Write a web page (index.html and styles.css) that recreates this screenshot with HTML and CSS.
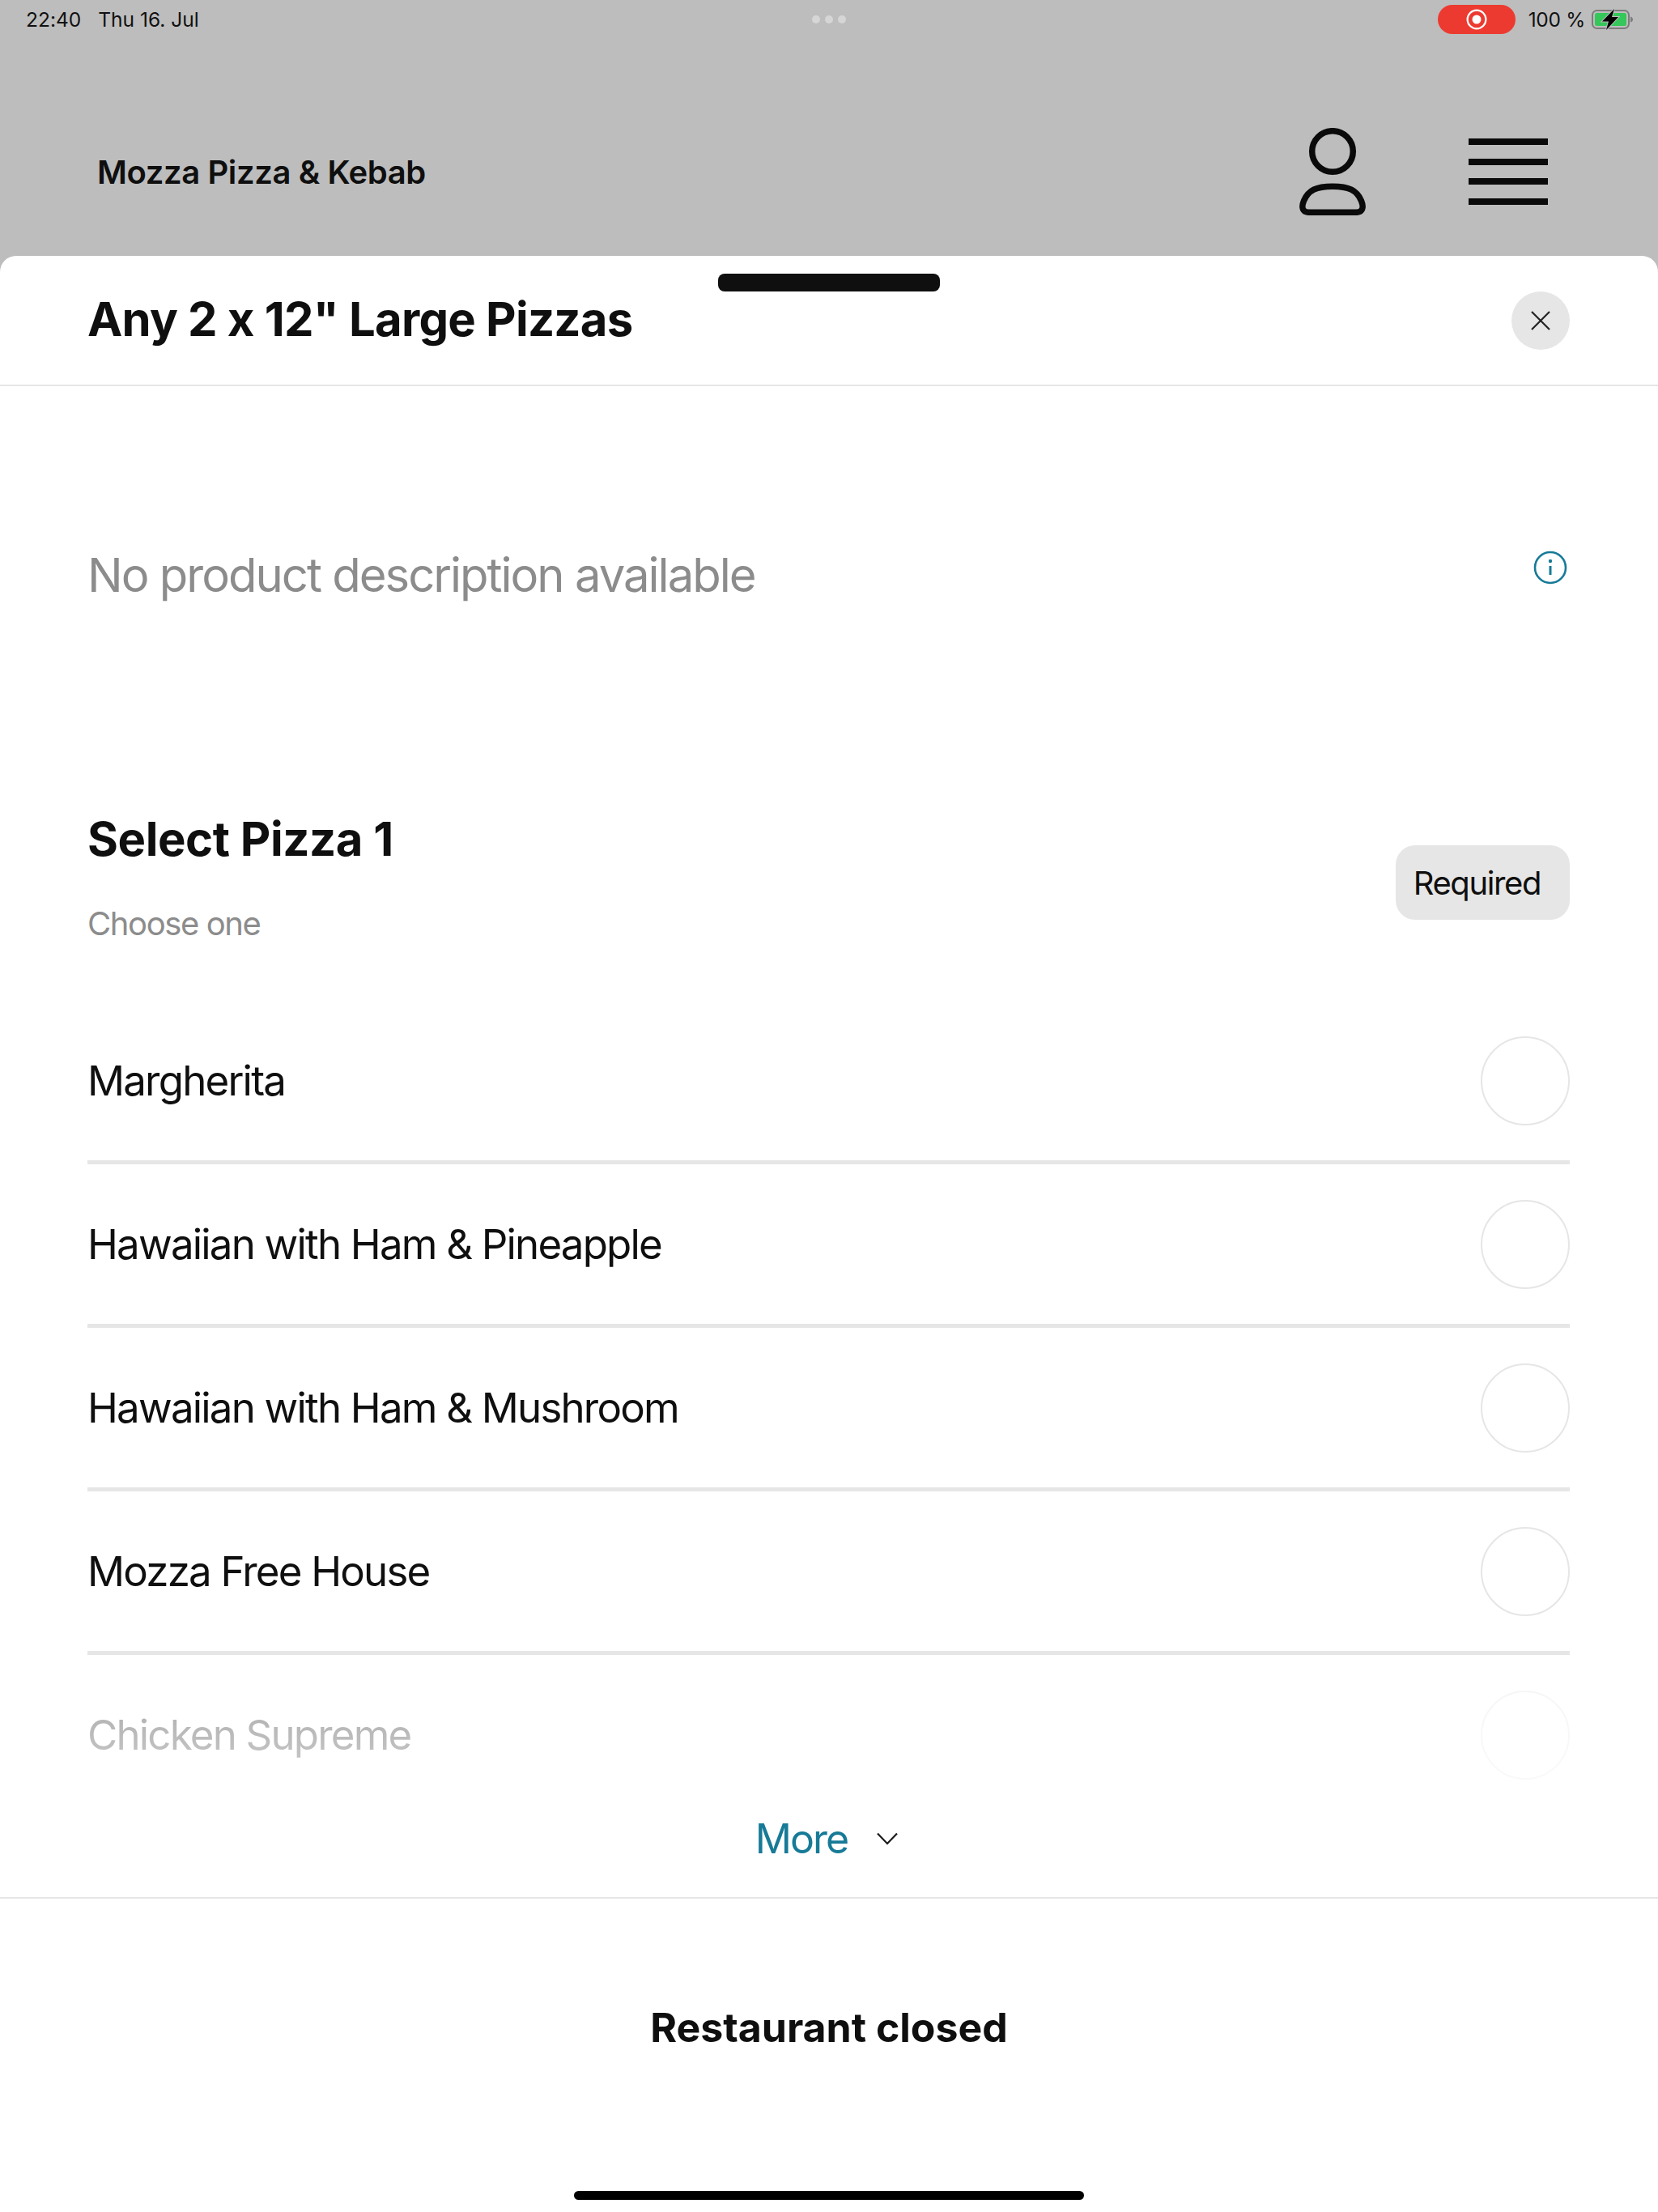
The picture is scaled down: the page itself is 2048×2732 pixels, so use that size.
FILE: index.html
```html
<!DOCTYPE html>
<html lang="en">
<head>
    <meta charset="UTF-8" />
    <title>Mozza Pizza &amp; Kebab</title>
    <link rel="stylesheet" href="styles.css">
</head>
<body>
<div class="statusbar">
  <div class="status-left"><span>22:40</span><span>Thu 16. Jul</span></div>
  <div class="status-dots"><i></i><i></i><i></i></div>
  <div class="status-right">
    <div class="rec-pill">
      <svg width="26" height="26" viewBox="0 0 26 26"><circle cx="13" cy="13" r="11.400" fill="none" stroke="#fff" stroke-width="2.200"/><circle cx="13" cy="13" r="5.500" fill="#fff"/></svg>
    </div>
    <span class="battery-text">100 %</span>
    <svg class="battery" width="52" height="26" viewBox="0 0 52 26">
      <rect x="1" y="2" width="45" height="22" rx="5.500" fill="none" stroke="#7c7c7c" stroke-width="2"/>
      <rect x="4" y="5" width="39" height="16" rx="2.500" fill="#34c759"/>
      <path d="M48 9.500c2 .5 3 2 3 3.500s-1 3-3 3.500z" fill="#7c7c7c"/>
      <path d="M28 0 L13 15.500 H21 L18 26 L33 10 H25 Z" fill="#000" stroke="#bdbdbd" stroke-width="2" paint-order="stroke"/>
    </svg>
  </div>
</div>

<header class="topbar">
  <div class="brand">Mozza Pizza &amp; Kebab</div>
  <svg class="user-icon" width="84" height="108" viewBox="0 0 84 108">
    <circle cx="42" cy="29" r="25.300" fill="none" stroke="#0a0a0a" stroke-width="7.500"/>
    <path d="M42 72.200C22 72.200 12 77 6.500 90C3 98.500 5 104.300 13 104.300H71C79 104.300 81 98.500 77.500 90C72 77 62 72.200 42 72.200Z" fill="none" stroke="#0a0a0a" stroke-width="7.500"/>
  </svg>
  <div class="burger"><i></i><i></i><i></i><i></i></div>
</header>

<main class="sheet">
  <div class="handle"></div>
  <div class="sheet-head">
    <h1>Any 2 x 12" Large Pizzas</h1>
    <button class="close">
      <svg width="26" height="26" viewBox="0 0 26 26"><path d="M2 2 L24 24 M24 2 L2 24" stroke="#222" stroke-width="2.200" fill="none"/></svg>
    </button>
  </div>

  <div class="descr">
    <p>No product description available</p>
    <svg class="info" width="42" height="42" viewBox="0 0 42 42">
      <circle cx="21" cy="21" r="19" fill="none" stroke="#177a97" stroke-width="2.600"/>
      <circle cx="21" cy="13" r="2.200" fill="#177a97"/>
      <path d="M21 19v11" stroke="#177a97" stroke-width="3"/>
    </svg>
  </div>

  <section class="group">
    <div class="group-head">
      <div class="group-title">
        <h2>Select Pizza 1</h2>
        <p class="hint">Choose one</p>
      </div>
      <span class="badge">Required</span>
    </div>
    <ul class="options">
      <li><span>Margherita</span><i class="radio"></i></li>
      <li><span>Hawaiian with Ham &amp; Pineapple</span><i class="radio"></i></li>
      <li><span>Hawaiian with Ham &amp; Mushroom</span><i class="radio"></i></li>
      <li><span>Mozza Free House</span><i class="radio"></i></li>
      <li><span>Chicken Supreme</span><i class="radio"></i></li>
    </ul>
    <div class="fade"></div>
  </section>

  <div class="more">
    <span>More</span>
    <svg width="26" height="16" viewBox="0 0 26 16"><path d="M1 1.500 L13 14 L25 1.500" fill="none" stroke="#1a1a1a" stroke-width="2.200"/></svg>
  </div>

  <div class="closed">Restaurant closed</div>
  <div class="home-bar"></div>
</main>
</body>
</html>
```

FILE: styles.css
```css
* {
    box-sizing: border-box;
}
html, body {
    margin: 0;
    padding: 0;
}
body {
    width: 2048px;
    height: 2732px;
    overflow: hidden;
    background-color: #bdbdbd;
    color: #0f0f0f;
    font-family: Inter, "Noto Sans", sans-serif;
    font-feature-settings: "calt" 0;
    display: flex;
    flex-direction: column;
}

/* status bar */
.statusbar {
    height: 48px;
    padding: 0 30px 0 32px;
    display: flex;
    align-items: center;
    justify-content: space-between;
    position: relative;
    font-size: 24.500px;
    color: #111;
}
.status-left span {
    margin-right: 21px;
}
.status-dots {
    position: absolute;
    left: 1003px;
    top: 19px;
    display: flex;
    gap: 6px;
}
.status-dots i {
    width: 10px;
    height: 10px;
    border-radius: 50%;
    background-color: #d6d6d6;
}
.status-right {
    display: flex;
    align-items: center;
}
.rec-pill {
    width: 96px;
    height: 36px;
    border-radius: 18px;
    background-color: #ec3a30;
    display: flex;
    align-items: center;
    justify-content: center;
    margin-right: 16px;
}
.battery-text {
    margin-right: 8px;
    letter-spacing: -0.300px;
}

/* top bar */
.topbar {
    height: 268px;
    display: flex;
    align-items: center;
    padding: 60px 136px 0 120px;
}
.brand {
    font-size: 40px;
    font-weight: 600;
    letter-spacing: -0.4px;
    flex: 1;
}
.user-icon {
    margin-right: 126px;
}
.burger {
    width: 98px;
    display: flex;
    flex-direction: column;
    gap: 16.500px;
}
.burger i {
    display: block;
    height: 8px;
    background-color: #0a0a0a;
}

/* sheet */
.sheet {
    flex: 1;
    background-color: #fff;
    border-radius: 20px 20px 0 0;
    position: relative;
    display: flex;
    flex-direction: column;
}
.handle {
    position: absolute;
    left: 887px;
    top: 22px;
    width: 274px;
    height: 22px;
    border-radius: 8px;
    background-color: #0f0f0f;
}
.sheet-head {
    height: 161px;
    padding: 0 109px 0 108px;
    border-bottom: 2px solid #e6e6e6;
    display: flex;
    align-items: center;
    justify-content: space-between;
}
h1 {
    margin: 0 0 3px;
    font-size: 58px;
    font-weight: 700;
    letter-spacing: -0.750px;
}
.close {
    width: 72px;
    height: 72px;
    border: none;
    border-radius: 50%;
    padding: 0;
    background-color: #e6e6e6;
    display: flex;
    align-items: center;
    justify-content: center;
}
.descr {
    height: 466px;
    padding: 198px 109px 0 108px;
    display: flex;
    justify-content: space-between;
    align-items: flex-start;
}
.descr p {
    margin: 0;
    font-size: 58px;
    letter-spacing: -2px;
    color: #8c8c8c;
}
.info {
    margin: 5px 3px 0 0;
}

/* option group */
.group {
    padding: 0 109px 0 108px;
    position: relative;
    height: 1267px;
    overflow: hidden;
}
.group-head {
    display: flex;
    justify-content: space-between;
    align-items: center;
    height: 293px;
}
.group-title {
    padding-bottom: 13px;
}
h2 {
    margin: 0 0 45px;
    font-size: 58px;
    font-weight: 700;
    letter-spacing: -0.450px;
}
.hint {
    margin: 0;
    font-size: 40px;
    letter-spacing: -1.400px;
    color: #8c8c8c;
}
.badge {
    background-color: #e6e6e6;
    border-radius: 24px;
    padding: 22px 36px 0 22px;
    height: 92px;
    font-size: 40px;
    letter-spacing: -1.400px;
}
.options {
    list-style: none;
    margin: 0;
    padding: 0;
}
.options li {
    height: 202px;
    display: flex;
    align-items: center;
    justify-content: space-between;
    border-bottom: 5px solid #e6e6e6;
    font-size: 51px;
    letter-spacing: -1.800px;
}
.options li:last-child {
    border-bottom-color: transparent;
}
.radio {
    width: 110px;
    height: 110px;
    border-radius: 50%;
    border: 2.500px solid #e6e6e6;
}
.fade {
    position: absolute;
    left: 0;
    right: 0;
    bottom: 0;
    height: 164px;
    background: linear-gradient(rgba(255, 255, 255, 0.6), rgba(255, 255, 255, 0.8));
}

.more {
    height: 135px;
    padding: 0 6px 12px 0;
    border-bottom: 2px solid #e6e6e6;
    display: flex;
    align-items: center;
    justify-content: center;
    gap: 36px;
    font-size: 50px;
    letter-spacing: -2px;
    color: #177a97;
}
.closed {
    text-align: center;
    font-size: 50px;
    font-weight: 700;
    margin-top: 129px;
}
.home-bar {
    position: absolute;
    left: 709px;
    bottom: 15px;
    width: 630px;
    height: 11px;
    border-radius: 6px;
    background-color: #000;
}
```
